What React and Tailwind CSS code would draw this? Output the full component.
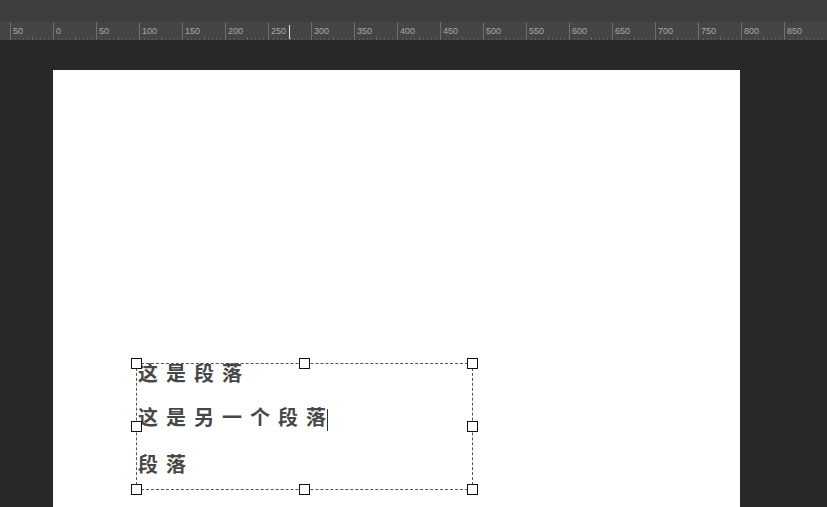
const labels = ['50', '0', '50', '100', '150', '200', '250', '300', '350', '400', '450', '500', '550', '600', '650', '700', '750', '800', '850'];

function Ruler() {
  return (
    <div className="relative flex h-[18px] bg-[#454545] pl-[10px] overflow-hidden">
      {labels.map((l, i) => (
        <div key={i} className="flex flex-col w-[43px] shrink-0 border-l border-[#6e6e6e] h-full">
          <span className="pl-[2px] pt-[3px] text-[9px] leading-[12px] text-[#a8a8a8] font-['Liberation_Sans',sans-serif]">
            {l}
          </span>
          <div className="mt-auto flex items-end justify-between px-[4px]">
            {[0, 1, 2, 3, 4, 5, 6, 7, 8].map((t) => (
              <div key={t} className={t === 4 ? 'w-px h-[3px] bg-[#666]' : 'w-px h-[2px] bg-[#5c5c5c]'} />
            ))}
          </div>
        </div>
      ))}
      {/* cursor position marker */}
      <div className="absolute left-[289px] top-[3px] w-px h-[14px] bg-[#e0e0e0]" />
    </div>
  );
}

function Handle({ className }) {
  return <div className={'absolute w-[11px] h-[11px] bg-white border border-[#111] ' + className} />;
}

function TextBox() {
  const lines = ['这是段落', '这是另一个段落', '段落'];
  return (
    <div className="relative ml-[83px] mt-[293px] w-[337px] h-[127px] border border-dashed border-[#555]">
      <div className="-mt-[2px] flex flex-col gap-[22px] pl-px text-[20px] leading-[22px] font-bold tracking-[8px] text-[#474747] font-['Noto_Sans_CJK_SC',sans-serif]">
        {lines.map((l, i) => (
          <div key={i} className="whitespace-nowrap">
            {l}
            {i === 1 && <span className="inline-block align-middle -ml-[7px] w-px h-[22px] bg-[#333]" />}
          </div>
        ))}
      </div>
      <Handle className="-left-[6px] -top-[6px]" />
      <Handle className="left-[162px] -top-[6px]" />
      <Handle className="-right-[6px] -top-[6px]" />
      <Handle className="-left-[6px] top-[57px]" />
      <Handle className="-right-[6px] top-[57px]" />
      <Handle className="-left-[6px] -bottom-[6px]" />
      <Handle className="left-[162px] -bottom-[6px]" />
      <Handle className="-right-[6px] -bottom-[6px]" />
    </div>
  );
}

export default function App() {
  return (
    <div className="w-[827px] h-[507px] overflow-hidden flex flex-col bg-[#282828]">
      <div className="h-[22px] bg-[#3e3e3e] shrink-0" />
      <Ruler />
      <div className="flex-1 pl-[53px] pt-[30px] overflow-hidden">
        <div className="w-[687px] h-[460px] bg-white flex flex-col items-start">
          <TextBox />
        </div>
      </div>
    </div>
  );
}
